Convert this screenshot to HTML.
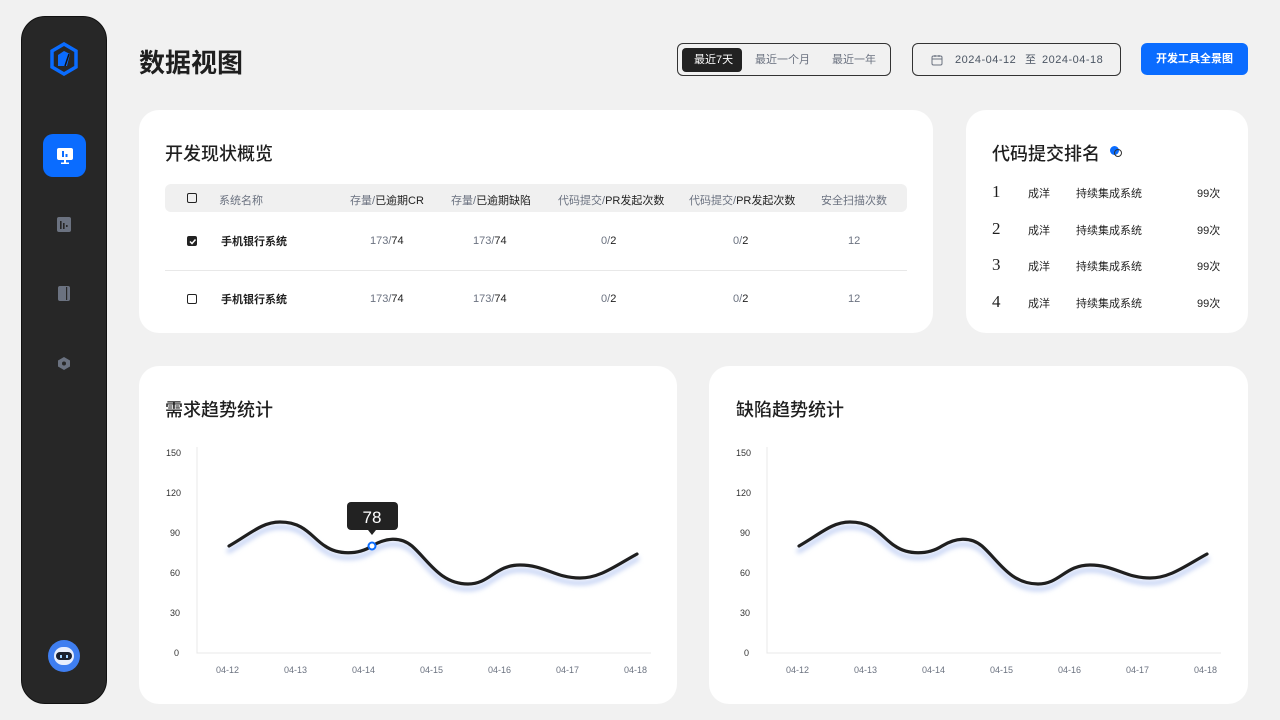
<!DOCTYPE html>
<html><head><meta charset="utf-8"><style>
*{box-sizing:border-box;margin:0;padding:0}
body{width:1280px;height:720px;background:#f1f1f1;font-family:"Liberation Sans","Noto Sans CJK SC",sans-serif;color:#1f1f1f;position:relative;overflow:hidden}
.abs{position:absolute}
.side{left:21px;top:16px;width:86px;height:688px;background:#272727;border-radius:24px;border:1px solid #111}
.card{background:#fff;border-radius:20px;position:absolute}
h1{position:absolute;left:139px;top:43px;font-size:26px;font-weight:700}
.h2{position:absolute;font-size:18px;font-weight:500}
.seg{left:677px;top:43px;width:214px;height:33px;border:1px solid #333;border-radius:6px;font-size:11px;color:#6b7280}
.seg span{position:absolute;top:7px}
.date{left:912px;top:43px;width:209px;height:33px;border:1px solid #333;border-radius:6px;font-size:11px;color:#4b5563}
.date span{line-height:14px;top:9px}
.btn{left:1141px;top:43px;width:107px;height:32px;background:#0a6cff;border-radius:6px;color:#fff;font-size:11px;font-weight:700;text-align:center;line-height:32px}
.th{left:165px;top:184px;width:742px;height:28px;background:#f0f0f0;border-radius:6px}
.t{position:absolute;font-size:11px;white-space:nowrap}
.g{color:#6b7280}
.cb{position:absolute;width:10px;height:10px;border:1px solid #222;border-radius:2px}
.rk{position:absolute;font-size:11px}
.num{font-family:"Liberation Serif",serif;font-size:17px}
.ax{position:absolute;font-size:9px;color:#333}
.xl{position:absolute;font-size:9px;color:#6b7280}
</style></head><body>
<div class="abs side"></div>
<svg class="abs" style="left:49px;top:42px" width="30" height="34" viewBox="0 0 30 34"><path d="M15 2 L27 9 L27 25 L15 32 L3 25 L3 9 Z" fill="none" stroke="#0a6cff" stroke-width="3.5"/><path d="M15 9 L21 12 L18 24 L9 24 L9 13 Z" fill="#0a6cff"/><path d="M20 12 L16 24" stroke="#111" stroke-width="1.5"/></svg>
<div class="abs" style="left:43px;top:134px;width:43px;height:43px;background:#0a6cff;border-radius:10px"></div>
<svg class="abs" style="left:56px;top:147px" width="18" height="18" viewBox="0 0 18 18"><rect x="1" y="1" width="16" height="12" rx="2" fill="#fff"/><rect x="6" y="4" width="2" height="6" fill="#0a6cff"/><rect x="9.5" y="7" width="2" height="3" fill="#0a6cff"/><rect x="8" y="13" width="2" height="3" fill="#fff"/><rect x="5" y="15.5" width="8" height="1.5" fill="#fff"/></svg>
<svg class="abs" style="left:56px;top:216px" width="16" height="17" viewBox="0 0 16 17"><rect x="1" y="1" width="14" height="15" rx="2" fill="#6b7280"/><rect x="4" y="5" width="1.6" height="8" fill="#272727"/><rect x="7" y="7" width="1.6" height="6" fill="#272727"/><rect x="10" y="9" width="1.6" height="2" fill="#272727"/></svg>
<svg class="abs" style="left:57px;top:285px" width="14" height="17" viewBox="0 0 14 17"><rect x="1" y="1" width="12" height="15" rx="2" fill="#6b7280"/><rect x="9" y="2" width="1.2" height="13" fill="#272727"/></svg>
<svg class="abs" style="left:57px;top:356px" width="14" height="15" viewBox="0 0 14 15"><path d="M7 1 L13 4.5 L13 10.5 L7 14 L1 10.5 L1 4.5Z" fill="#6b7280"/><circle cx="7" cy="7.5" r="2" fill="#272727"/></svg>
<div class="abs" style="left:48px;top:640px;width:32px;height:32px;border-radius:50%;background:#3f7ef0"></div>
<div class="abs" style="left:54px;top:647px;width:20px;height:18px;border-radius:9px;background:#e8eefc"></div>
<div class="abs" style="left:56px;top:652px;width:16px;height:8px;border-radius:4px;background:#1a1f2e"></div>
<div class="abs" style="left:60px;top:655px;width:2px;height:3px;background:#9fd0ff"></div><div class="abs" style="left:66px;top:655px;width:2px;height:3px;background:#9fd0ff"></div>

<h1>数据视图</h1>
<div class="abs seg"><div class="abs" style="left:4px;top:4px;width:60px;height:24px;background:#222;border-radius:4px"></div><span style="left:16px;color:#fff">最近7天</span><span style="left:77px">最近一个月</span><span style="left:154px">最近一年</span></div>
<div class="abs date"><svg class="abs" style="left:18px;top:10px" width="12" height="12" viewBox="0 0 12 12"><rect x="1" y="2" width="10" height="9" rx="1.5" fill="none" stroke="#6b7280"/><path d="M1 5H11M4 1V3M8 1V3" stroke="#6b7280"/></svg><span class="abs" style="left:42px;letter-spacing:0.5px">2024-04-12</span><span class="abs" style="left:112px">至</span><span class="abs" style="left:129px;letter-spacing:0.5px">2024-04-18</span></div>
<div class="abs btn">开发工具全景图</div>

<div class="card" style="left:139px;top:110px;width:794px;height:223px"></div>
<div class="h2" style="left:165px;top:140px">开发现状概览</div>
<div class="abs th"></div>
<div class="cb" style="left:187px;top:193px"></div>
<div class="t g" style="left:219px;top:192px">系统名称</div>
<div class="t" style="left:350px;top:192px"><span class="g">存量/</span>已逾期CR</div>
<div class="t" style="left:451px;top:192px"><span class="g">存量/</span>已逾期缺陷</div>
<div class="t" style="left:558px;top:192px"><span class="g">代码提交/</span>PR发起次数</div>
<div class="t" style="left:689px;top:192px"><span class="g">代码提交/</span>PR发起次数</div>
<div class="t g" style="left:821px;top:192px">安全扫描次数</div>
<div class="cb" style="left:187px;top:236px;background:#222"></div>
<svg class="abs" style="left:188px;top:237px" width="9" height="9"><path d="M2 4.5L4 6.5L7.5 2.5" stroke="#fff" stroke-width="1.5" fill="none"/></svg>
<div class="abs" style="left:165px;top:270px;width:742px;height:1px;background:#e8e8e8"></div>
<div class="cb" style="left:187px;top:294px"></div>
<div class="t" style="left:221px;top:233px;font-weight:600">手机银行系统</div>
<div class="t" style="left:221px;top:291px;font-weight:600">手机银行系统</div>
<div class="t" style="left:370px;top:235px"><span class="g">173/</span>74</div><div class="t" style="left:473px;top:235px"><span class="g">173/</span>74</div><div class="t" style="left:601px;top:235px"><span class="g">0/</span>2</div><div class="t" style="left:733px;top:235px"><span class="g">0/</span>2</div><div class="t g" style="left:848px;top:235px">12</div>
<div class="t" style="left:370px;top:293px"><span class="g">173/</span>74</div><div class="t" style="left:473px;top:293px"><span class="g">173/</span>74</div><div class="t" style="left:601px;top:293px"><span class="g">0/</span>2</div><div class="t" style="left:733px;top:293px"><span class="g">0/</span>2</div><div class="t g" style="left:848px;top:293px">12</div>

<div class="card" style="left:966px;top:110px;width:282px;height:223px"></div>
<div class="h2" style="left:992px;top:140px">代码提交排名</div>
<div class="abs" style="left:1110px;top:146px;width:9px;height:9px;border-radius:50%;background:#0a6cff"></div>
<div class="abs" style="left:1114px;top:149px;width:8px;height:8px;border-radius:50%;border:1px solid #333"></div>
<div class="rk num" style="left:992px;top:182px">1</div><div class="rk num" style="left:992px;top:219px">2</div><div class="rk num" style="left:992px;top:255px">3</div><div class="rk num" style="left:992px;top:292px">4</div>
<div class="rk" style="left:1028px;top:185px">成洋</div><div class="rk" style="left:1076px;top:185px">持续集成系统</div><div class="rk" style="left:1197px;top:185px">99次</div>
<div class="rk" style="left:1028px;top:222px">成洋</div><div class="rk" style="left:1076px;top:222px">持续集成系统</div><div class="rk" style="left:1197px;top:222px">99次</div>
<div class="rk" style="left:1028px;top:258px">成洋</div><div class="rk" style="left:1076px;top:258px">持续集成系统</div><div class="rk" style="left:1197px;top:258px">99次</div>
<div class="rk" style="left:1028px;top:295px">成洋</div><div class="rk" style="left:1076px;top:295px">持续集成系统</div><div class="rk" style="left:1197px;top:295px">99次</div>

<div class="card" style="left:139px;top:366px;width:538px;height:338px"></div>
<div class="card" style="left:709px;top:366px;width:539px;height:338px"></div>
<div class="h2" style="left:165px;top:396px">需求趋势统计</div>
<div class="h2" style="left:736px;top:396px">缺陷趋势统计</div>

<svg class="abs" style="left:0;top:0" width="1280" height="720">
<defs><filter id="f" x="-10%" y="-50%" width="120%" height="200%"><feGaussianBlur stdDeviation="2.5"/></filter>
<path id="c" d="M229 546 C250 534 262 522 280 522 C305 522 312 538 325 546 C338 555 358 555 372 546 C385 538 400 536 412 546 C428 560 440 584 468 584 C490 584 495 565 520 565 C545 565 555 578 580 578 C600 578 615 566 637 554"/></defs>
<g fill="none" stroke-linecap="round">
<use href="#c" stroke="#c9d6f5" stroke-width="5" transform="translate(0,5)" filter="url(#f)"/>
<use href="#c" stroke="#1f1f1f" stroke-width="3.2"/>
<g transform="translate(570,0)"><use href="#c" stroke="#c9d6f5" stroke-width="5" transform="translate(0,5)" filter="url(#f)"/><use href="#c" stroke="#1f1f1f" stroke-width="3.2"/></g>
</g>
<path d="M197 447V653H651M767 447V653H1221" stroke="#e8e8e8" fill="none"/>
<circle cx="372" cy="546" r="3.5" fill="#fff" stroke="#0a6cff" stroke-width="2"/>
<rect x="347" y="502" width="51" height="28" rx="4" fill="#222"/><path d="M368 530L372 535L376 530Z" fill="#222"/>
<text x="372" y="523" font-size="17" fill="#fff" text-anchor="middle" font-family="Liberation Sans">78</text>
</svg>
<div class="ax" style="left:166px;top:448px">150</div><div class="ax" style="left:166px;top:488px">120</div><div class="ax" style="left:170px;top:528px">90</div><div class="ax" style="left:170px;top:568px">60</div><div class="ax" style="left:170px;top:608px">30</div><div class="ax" style="left:174px;top:648px">0</div>
<div class="ax" style="left:736px;top:448px">150</div><div class="ax" style="left:736px;top:488px">120</div><div class="ax" style="left:740px;top:528px">90</div><div class="ax" style="left:740px;top:568px">60</div><div class="ax" style="left:740px;top:608px">30</div><div class="ax" style="left:744px;top:648px">0</div>
<div class="xl" style="left:216px;top:665px">04-12</div><div class="xl" style="left:284px;top:665px">04-13</div><div class="xl" style="left:352px;top:665px">04-14</div><div class="xl" style="left:420px;top:665px">04-15</div><div class="xl" style="left:488px;top:665px">04-16</div><div class="xl" style="left:556px;top:665px">04-17</div><div class="xl" style="left:624px;top:665px">04-18</div>
<div class="xl" style="left:786px;top:665px">04-12</div><div class="xl" style="left:854px;top:665px">04-13</div><div class="xl" style="left:922px;top:665px">04-14</div><div class="xl" style="left:990px;top:665px">04-15</div><div class="xl" style="left:1058px;top:665px">04-16</div><div class="xl" style="left:1126px;top:665px">04-17</div><div class="xl" style="left:1194px;top:665px">04-18</div>
</body></html>
